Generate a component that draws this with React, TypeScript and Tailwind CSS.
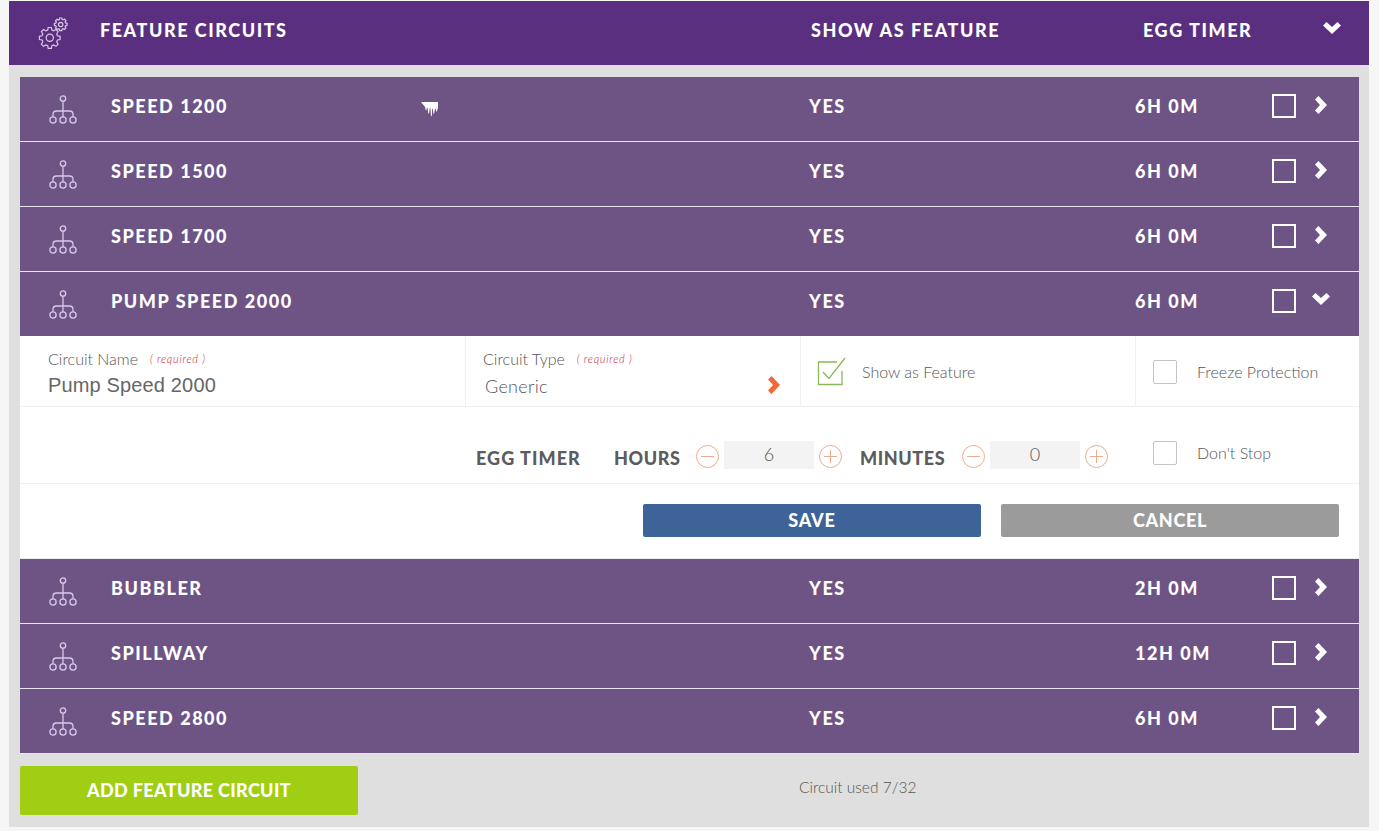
const heading = "font-['Lato','Liberation_Sans',sans-serif]";

function GearsIcon() {
  return (
    <svg width="32" height="32" viewBox="0 0 32 32" fill="none" stroke="#d9c8ea" strokeWidth="1.2">
      <path d="M12.2 10.5h3.2l.5 2.6 1.700.8 2.300-1.400 2.200 2.200-1.400 2.300.8 1.800 2.600.5v3.200l-2.600.5-.8 1.800 1.400 2.300-2.200 2.200-2.300-1.400-1.700.7-.5 2.700h-3.200l-.5-2.700-1.800-.7-2.300 1.400-2.200-2.200 1.400-2.300-.7-1.800-2.700-.5v-3.200l2.700-.5.7-1.800-1.400-2.300 2.200-2.200 2.300 1.400 1.800-.8z" />
      <circle cx="13.800" cy="20.800" r="3.600" />
      <path d="M23.600 1h2.200l.3 1.400 1 .5 1.300-.8 1.500 1.500-.8 1.300.5 1 1.400.3v2.200l-1.400.3-.5 1 .8 1.300-1.500 1.500-1.300-.8-1 .5-.3 1.400h-2.200l-.3-1.400-1-.5-1.300.8-1.500-1.500.8-1.300-.5-1-1.400-.3V6.400l1.400-.3.5-1-.8-1.300 1.500-1.500 1.300.8 1-.5z" />
      <circle cx="24.700" cy="7.500" r="2.200" />
    </svg>
  );
}

function TreeIcon() {
  return (
    <svg width="28" height="30" viewBox="0 0 28 30" fill="none" stroke="#d9c8ea" strokeWidth="1.300">
      <circle cx="14" cy="3.500" r="2.700" />
      <path d="M14 6.200v16M4 21.800v-2.300q0-3.500 3.500-3.500h13q3.500 0 3.500 3.500v2.300" />
      <circle cx="4" cy="25" r="3.100" />
      <circle cx="14" cy="25" r="3.100" />
      <circle cx="24" cy="25" r="3.100" />
    </svg>
  );
}

function IceIcon() {
  return (
    <svg width="17" height="15" viewBox="0 0 17 15" fill="#ffffff" className="absolute left-[401px] top-[25px]">
      <path d="M0 0h17v5l-.6 3-.9 2-.9-3-.6-.5-.6 4-.8 2-.7-5.500-.7-.5-.4 8-.9-1-.4-7-.7-.5-.6 4.500-.9 1.500-.7-6-.7-.5-.6 3-.7-.5-.5-3z" />
    </svg>
  );
}

function Chevron({ down = false, color = "#ffffff" }: { down?: boolean; color?: string }) {
  return (
    <svg width="18" height="18" viewBox="0 0 18 18" fill={color}>
      <path d={down ? "M0 4.500 3.500 1 9 6l5.500-5L18 4.500 9 13z" : "M3 3.500 6.500 0 15 9l-8.500 9L3 14.500 8 9z"} />
    </svg>
  );
}

function Row({ name, time, open = false, ice = false }: { name: string; time: string; open?: boolean; ice?: boolean }) {
  return (
    <div
      className={`relative flex items-center bg-[#6d5485] text-[18px] font-black tracking-[1.550px] text-white ${heading} ${
        open ? "h-[64px]" : "h-[65px] border-b border-[#e9e4ee]"
      }`}
    >
      <div className="flex w-[91px] justify-start pl-[29px] pt-[1px]">
        <TreeIcon />
      </div>
      <div className="w-[698px] pb-[5px]">{name}</div>
      {ice && <IceIcon />}
      <div className="w-[326px] pb-[5px]">YES</div>
      <div className="w-[138px] pb-[5px]">{time}</div>
      <div className="mb-[6px] -ml-px h-[24px] w-[24px] border-2 border-white" />
      <div className={`ml-[16px] ${open ? "mb-[6px]" : "mb-[8px]"}`}>
        <Chevron down={open} />
      </div>
    </div>
  );
}

function Stepper({ value }: { value: string }) {
  return (
    <div className="flex items-center">
      <span className="mt-[4px] flex h-[23px] w-[23px] items-center justify-center rounded-full border border-[#ecab8e]">
        <span className="h-px w-[13px] bg-[#ecab8e]" />
      </span>
      <span className={`mx-[5px] flex h-[28px] w-[90px] items-center justify-center bg-[#f3f3f3] text-[18px] font-light text-[#555] ${heading}`}>
        {value}
      </span>
      <span className="relative mt-[4px] flex h-[23px] w-[23px] items-center justify-center rounded-full border border-[#ecab8e]">
        <span className="h-px w-[13px] bg-[#ecab8e]" />
        <span className="absolute h-[13px] w-px bg-[#ecab8e]" />
      </span>
    </div>
  );
}

function CheckOption({ label, checked = false }: { label: string; checked?: boolean }) {
  return (
    <div className="flex items-center">
      {checked ? (
        <svg width="29" height="29" viewBox="0 0 29 29" fill="none" stroke="#8bb85c" strokeWidth="1.300" className="mb-[1px]">
          <path d="M25 14v13.500H1.500V5H20" />
          <path d="M6 15l6 6.500L28 1" />
        </svg>
      ) : (
        <span className="h-[24px] w-[24px] rounded-[2px] border border-[#c4c4c4]" />
      )}
      <span className={`text-[16px] font-light text-[#555] ${heading} ${checked ? "ml-[16px]" : "ml-[20px]"}`}>{label}</span>
    </div>
  );
}

function Required() {
  return <span className={`ml-[12px] align-[2px] text-[11px] italic tracking-[.7px] text-[#c8202f] ${heading}`}>( required )</span>;
}

const timerLabel = "text-[18px] font-black text-[#5c5c5c]";

function EditPanel() {
  return (
    <div className={`h-[223px] border-b border-[#ececec] bg-white ${heading}`}>
      <div className="flex h-[71px] border-b border-[#f1f1f1]">
        <div className="w-[446px] border-r border-[#f1f1f1] pl-[28px] pt-[13px]">
          <div className="text-[16px] leading-[20px] font-light text-[#555]">
            Circuit Name
            <Required />
          </div>
          <div className="mt-[4px] font-['Liberation_Sans',sans-serif] text-[20px] leading-[24px] tracking-[.15px] text-[#666]">Pump Speed 2000</div>
        </div>
        <div className="relative w-[335px] border-r border-[#f1f1f1] pl-[17px] pt-[13px]">
          <div className="text-[16px] leading-[20px] font-light text-[#555]">
            Circuit Type
            <Required />
          </div>
          <div className="mt-[5px] pl-[2px] text-[18px] leading-[24px] font-light tracking-[.3px] text-[#555]">Generic</div>
          <div className="absolute right-[17px] top-[40px]">
            <Chevron color="#f0693a" />
          </div>
        </div>
        <div className="flex w-[335px] items-center border-r border-[#f1f1f1] pl-[16px] pt-[2px]">
          <CheckOption label="Show as Feature" checked />
        </div>
        <div className="flex flex-1 items-center pl-[17px] pt-[2px]">
          <CheckOption label="Freeze Protection" />
        </div>
      </div>
      <div className="flex h-[77px] items-center border-b border-[#f1f1f1] pt-[19px] pl-[456px]">
        <span className={`w-[138px] pt-[7px] tracking-[1.050px] ${timerLabel}`}>EGG TIMER</span>
        <span className={`w-[82px] pt-[7px] tracking-[.6px] ${timerLabel}`}>HOURS</span>
        <Stepper value="6" />
        <span className={`ml-[18px] w-[102px] pt-[7px] tracking-[.6px] ${timerLabel}`}>MINUTES</span>
        <Stepper value="0" />
        <div className="mb-[4px] ml-[45px]">
          <CheckOption label="Don't Stop" />
        </div>
      </div>
      <div className="flex justify-end gap-[20px] pr-[20px] pt-[20px]">
        <button className="h-[33px] w-[338px] rounded-[2px] bg-[#3d6399] text-[18px] font-black tracking-[.8px] text-white">SAVE</button>
        <button className="h-[33px] w-[338px] rounded-[2px] bg-[#9b9b9b] text-[18px] font-black tracking-[.7px] text-white">CANCEL</button>
      </div>
    </div>
  );
}

export default function App() {
  return (
    <div className="h-[831px] w-[1379px] overflow-hidden bg-[#f6f6f6] pl-[9px] pt-px">
      <div className="h-[826px] w-[1360px] bg-[#dfdfdf]">
        {/* Header */}
        <div className={`flex h-[64px] items-center bg-[#5a2f7f] text-[18px] font-black tracking-[1.550px] text-white ${heading}`}>
          <div className="w-[91px] pl-[27px] pb-[1px]">
            <GearsIcon />
          </div>
          <div className="w-[711px] pb-[6px]">FEATURE CIRCUITS</div>
          <div className="w-[332px] pb-[6px]">SHOW AS FEATURE</div>
          <div className="w-[180px] pb-[6px]">EGG TIMER</div>
          <div className="pb-[7px]">
            <Chevron down />
          </div>
        </div>

        <div className="pl-[11px] pr-[10px] pt-[12px]">
          <Row name="SPEED 1200" time="6H 0M" ice />
          <Row name="SPEED 1500" time="6H 0M" />
          <Row name="SPEED 1700" time="6H 0M" />
          <Row name="PUMP SPEED 2000" time="6H 0M" open />
          <EditPanel />
          <Row name="BUBBLER" time="2H 0M" />
          <Row name="SPILLWAY" time="12H 0M" />
          <Row name="SPEED 2800" time="6H 0M" />

          {/* Footer */}
          <div className="flex items-start pt-[12px]">
            <button className={`h-[49px] w-[338px] rounded-[2px] bg-[#9fce12] pb-[1px] text-[18px] font-black tracking-[.35px] text-white ${heading}`}>ADD FEATURE CIRCUIT</button>
            <div className={`ml-[441px] pt-[10px] text-[15.500px] font-light text-[#555] ${heading}`}>Circuit used 7/32</div>
          </div>
        </div>
      </div>
    </div>
  );
}
